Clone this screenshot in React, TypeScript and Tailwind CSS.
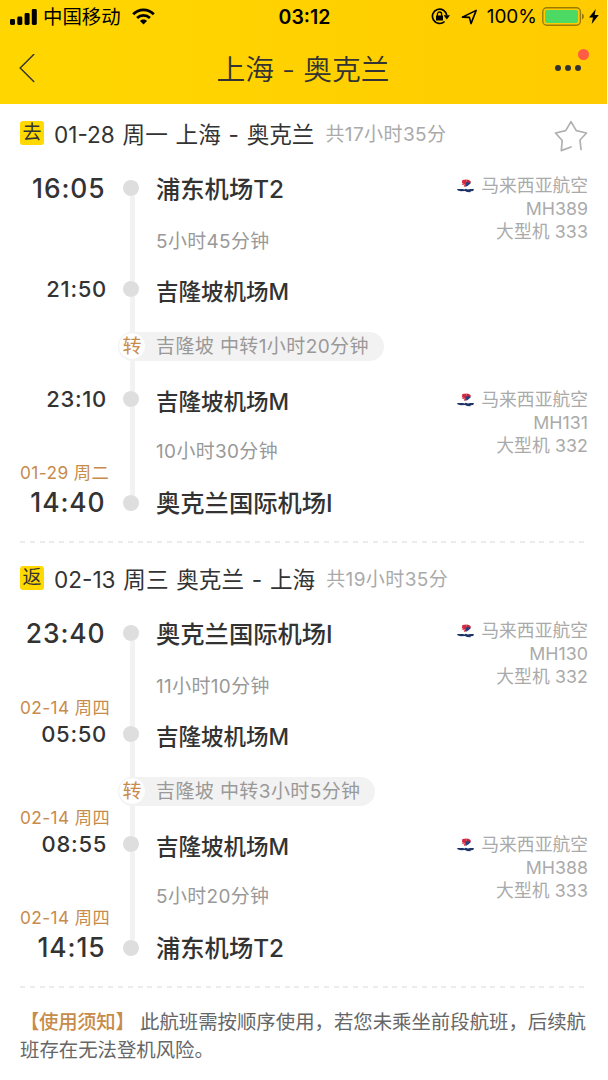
import React from "react";

interface Stop {
  time: string;
  name: string;
  date?: string;
}

interface Leg {
  from: Stop;
  to: Stop;
  duration: string;
  flightNo: string;
  aircraft: string;
}

interface Trip {
  tag: string;
  date: string;
  route: string;
  total: string;
  transfer: string;
  legs: [Leg, Leg];
}

const trips: Trip[] = [
  {
    tag: "去",
    date: "01-28 周一",
    route: "上海 - 奥克兰",
    total: "共17小时35分",
    transfer: "吉隆坡 中转1小时20分钟",
    legs: [
      {
        from: { time: "16:05", name: "浦东机场T2" },
        to: { time: "21:50", name: "吉隆坡机场M" },
        duration: "5小时45分钟",
        flightNo: "MH389",
        aircraft: "大型机 333",
      },
      {
        from: { time: "23:10", name: "吉隆坡机场M" },
        to: { time: "14:40", name: "奥克兰国际机场I", date: "01-29 周二" },
        duration: "10小时30分钟",
        flightNo: "MH131",
        aircraft: "大型机 332",
      },
    ],
  },
  {
    tag: "返",
    date: "02-13 周三",
    route: "奥克兰 - 上海",
    total: "共19小时35分",
    transfer: "吉隆坡 中转3小时5分钟",
    legs: [
      {
        from: { time: "23:40", name: "奥克兰国际机场I" },
        to: { time: "05:50", name: "吉隆坡机场M", date: "02-14 周四" },
        duration: "11小时10分钟",
        flightNo: "MH130",
        aircraft: "大型机 332",
      },
      {
        from: { time: "08:55", name: "吉隆坡机场M", date: "02-14 周四" },
        to: { time: "14:15", name: "浦东机场T2", date: "02-14 周四" },
        duration: "5小时20分钟",
        flightNo: "MH388",
        aircraft: "大型机 333",
      },
    ],
  },
];

const StatusBar: React.FC = () => (
  <div className="flex h-[33px] items-center pl-[10px] pr-[8px] text-black">
    <div className="flex flex-1 items-center">
      <svg width="27" height="16" viewBox="0 0 27 16" fill="currentColor">
        <rect x="0" y="10" width="5" height="6" rx="1.4" />
        <rect x="7.3" y="7.5" width="5" height="8.5" rx="1.4" />
        <rect x="14.6" y="4" width="5" height="12" rx="1.4" />
        <rect x="21.8" y="0" width="5" height="16" rx="1.4" />
      </svg>
      <span className="ml-[6px] text-[19.4px] leading-[24px]">中国移动</span>
      <svg
        className="ml-[11px]"
        width="23"
        height="17"
        viewBox="0 0 23 17"
        fill="none"
        stroke="currentColor"
        strokeWidth="2.8"
      >
        <path d="M1.2 6.2C7 .3 16 .3 21.8 6.2" />
        <path d="M5.1 10c3.6-3.5 9.2-3.5 12.8 0" />
        <path d="M8 12.9c2-1.9 5-1.9 7 0L11.5 16.6Z" fill="currentColor" stroke="none" />
      </svg>
    </div>
    <span className="text-[19.5px] font-semibold leading-[24px]">03:12</span>
    <div className="flex flex-1 items-center justify-end">
      <svg width="20" height="17" viewBox="0 0 20 17" fill="none">
        <path
          d="M13.6 13.5A7.2 7.2 0 1 1 15.8 7.4"
          stroke="currentColor"
          strokeWidth="1.7"
        />
        <path d="M12.6 7.2h6.4l-3.2 4.2Z" fill="currentColor" />
        <rect x="5" y="7.4" width="7" height="5.2" rx=".6" fill="currentColor" />
        <path d="M6.4 8V6.1a2.1 2.1 0 0 1 4.2 0V8" stroke="currentColor" strokeWidth="1.3" />
      </svg>
      <svg className="ml-[10px]" width="17" height="16" viewBox="0 0 17 16" fill="none">
        <path
          d="M15.2 1.4 1.4 8.1l7 .3 1.6 6.2Z"
          stroke="currentColor"
          strokeWidth="1.6"
          strokeLinejoin="round"
        />
      </svg>
      <span className="ml-[9px] text-[19px] leading-[24px]">100%</span>
      <svg className="ml-[5px]" width="44" height="19" viewBox="0 0 44 19">
        <rect x=".8" y=".8" width="37.6" height="17.4" rx="4" fill="none" stroke="#9a7b06" strokeWidth="1.4" />
        <rect x="3" y="3" width="33" height="13" rx="2" fill="#4cd964" />
        <path d="M40 6.5c2.6 1 2.6 5 0 6Z" fill="#9a7b06" />
      </svg>
      <svg className="ml-[3px]" width="10" height="15" viewBox="0 0 10 15" fill="currentColor">
        <path d="M6.8 0 0 8.4h4L2.7 15 9.8 6H5.6Z" />
      </svg>
    </div>
  </div>
);

const Header: React.FC = () => (
  <header className="h-[104px] w-[607px] bg-linear-to-r from-[#ffd700] to-[#ffcb00]">
    <StatusBar />
    <div className="flex h-[71px] items-center justify-between pl-[19px] pr-[25px] text-[#333]">
      <svg width="60" height="30" viewBox="0 0 60 30" fill="none" stroke="currentColor" strokeWidth="1.4">
        <path d="M15.2 0 1.2 14l14 14" />
      </svg>
      <h1 className="pt-[2px] text-[28.8px] font-[350] leading-[36px]">上海 - 奥克兰</h1>
      <div className="relative mb-[1px] mr-px flex w-[54px] justify-end gap-[3.5px]">
        <i className="size-[6.5px] rounded-full bg-[#333]" />
        <i className="size-[6.5px] rounded-full bg-[#333]" />
        <i className="size-[6.5px] rounded-full bg-[#333]" />
        <i className="absolute -right-[8px] -top-[16px] size-[11px] rounded-full bg-[#ff5b45]" />
      </div>
    </div>
  </header>
);

const Rail: React.FC<{ hidden?: boolean }> = ({ hidden }) => (
  <i className={`ml-px w-[5px] flex-1 ${hidden ? "" : "bg-[#f2f2f2]"}`} />
);

interface StopRowProps {
  stop: Stop;
  className: string;
  terminal?: "first" | "last";
}

const StopRow: React.FC<StopRowProps> = ({ stop, className, terminal }) => (
  <div className={`flex ${className}`}>
    <div
      className={`flex w-[118px] items-center justify-end font-[450] ${
        terminal
          ? "pr-[12.5px] text-[26.4px] tracking-[0.9px]"
          : "pr-[11px] text-[22px] tracking-[0.7px]"
      } ${terminal === "first" ? "pt-px" : ""}`}
    >
      {stop.time}
    </div>
    <div className="flex w-[27px] flex-col items-center">
      <Rail hidden={terminal === "first"} />
      <i className="mr-px size-[16px] rounded-full bg-[#dedede]" />
      <Rail hidden={terminal === "last"} />
    </div>
    <div
      className={`ml-[11px] flex items-center whitespace-nowrap font-medium ${
        terminal ? "text-[24.3px]" : "pt-[6px] text-[22.5px]"
      } ${terminal === "first" ? "pt-[2px]" : ""}`}
    >
      {stop.name}
    </div>
  </div>
);

const DateLabel: React.FC<{ date?: string; className: string }> = ({ date, className }) => (
  <div
    className={`flex w-[118px] items-end whitespace-nowrap pl-[20px] text-[17.3px] tracking-[0.4px] text-[#c78b4b] ${className}`}
  >
    {date}
  </div>
);

const DurationRow: React.FC<{ leg: Leg; last: boolean }> = ({ leg, last }) => (
  <div className={`flex ${last ? "h-[74px]" : "h-[58px]"}`}>
    <DateLabel date={leg.to.date} className={last ? "leading-[30px]" : "leading-[14px]"} />
    <div className="flex w-[27px] flex-col items-center">
      <Rail />
    </div>
    <span className="ml-[11px] flex items-center pt-[3px] text-[18.9px] tracking-[0.4px] text-[#999]">
      {leg.duration}
    </span>
  </div>
);

const AirlineLogo: React.FC = () => (
  <svg width="17" height="14" viewBox="0 0 17 14">
    <path d="M5.4.9 9.6.4 10 6 8 8 6.5 7l1.7-1.5-3.6.4 2-1.6-1.8.2Z" fill="#d9283c" />
    <path d="M9.8.4c3 .2 4.4 1.7 4 3.4L11.6 6l-2.2.6Z" fill="#c0243f" />
    <path d="M8.6 3.6 11 3.2l2.8.8-2.6 2.6L8.6 8l.6-2Z" fill="#27417f" />
    <path
      d="M0 9.9h6l1.4.7 1.4-.8 2.2.6 2-.3h4l-.8 1.9-2.4.2-.6 1-3.2-.2-2-.9-4 .1-3.2-.6Z"
      fill="#1e3467"
    />
  </svg>
);

const LegBlock: React.FC<{ leg: Leg; last?: boolean }> = ({ leg, last = false }) => (
  <div className="flex justify-between pr-[20px]">
    <div>
      <StopRow
        stop={leg.from}
        className={last ? "h-[30px]" : "h-[48px]"}
        terminal={last ? undefined : "first"}
      />
      <DurationRow leg={leg} last={last} />
      <StopRow
        stop={leg.to}
        className={last ? "h-[30px]" : "h-[38px]"}
        terminal={last ? "last" : undefined}
      />
    </div>
    <div
      className={`flex flex-col items-end text-[17.8px] text-[#aaa] ${
        last ? "pt-[5px]" : "pt-[11px]"
      }`}
    >
      <span className="flex h-[22px] items-center gap-[7px]">
        <AirlineLogo />
        马来西亚航空
      </span>
      <span className="h-[23px] leading-[23px]">{leg.flightNo}</span>
      <span className="h-[24px] leading-[24px] tracking-[0.1px]">{leg.aircraft}</span>
    </div>
  </div>
);

const TransferRow: React.FC<{ text: string; date?: string }> = ({ text, date }) => (
  <div className="flex h-[76px]">
    <DateLabel date={date} className="leading-[22px]" />
    <div className="flex flex-col">
      <div className="flex w-[27px] flex-1 justify-center">
        <i className="ml-px w-[5px] bg-[#f2f2f2]" />
      </div>
      <div className="flex h-[29px] items-center rounded-full bg-[#f2f2f2] pr-[15px]">
        <span className="flex size-[28px] items-center justify-center rounded-full border border-[#f2f2f2] bg-white pt-[2px] text-[19px] text-[#c78b4b]">
          转
        </span>
        <span className="ml-[10px] pt-[2px] text-[19px] tracking-[0.4px] text-[#999]">
          {text}
        </span>
      </div>
      <div className="flex w-[27px] flex-1 justify-center">
        <i className="ml-px w-[5px] bg-[#f2f2f2]" />
      </div>
    </div>
  </div>
);

const StarIcon: React.FC = () => (
  <svg
    className="mt-[4px]"
    width="34"
    height="32"
    viewBox="0 0 34 32"
    fill="none"
    stroke="#b0b0b0"
    strokeWidth="1.7"
    strokeLinejoin="round"
    strokeLinecap="round"
  >
    <path d="M27 29.5 26 20 32.5 13 22.3 10.6 17 1.6 11.7 10.6 1.5 13 8.2 20.5 7.3 30.6 17 27" />
  </svg>
);

const Divider: React.FC = () => (
  <div className="mx-[20px] h-[2px] bg-[repeating-linear-gradient(90deg,#ececec_0_5px,transparent_5px_9.8px)]" />
);

const TripBlock: React.FC<{ trip: Trip; favorite?: boolean }> = ({ trip, favorite }) => (
  <section>
    <div className="flex h-[60px] items-center pl-[20px] pr-[20px]">
      <span className="mb-[3px] flex size-[24px] items-center justify-center rounded-[3px] bg-[#ffd900] text-[19px] leading-[24px]">
        {trip.tag}
      </span>
      <h2 className="ml-[10px] whitespace-pre pt-px text-[22.6px] [word-spacing:1.4px]">
        {trip.date} {trip.route}
      </h2>
      <span className="ml-[11px] flex-1 pt-[2px] text-[19px] tracking-[0.4px] text-[#aaa]">
        {trip.total}
      </span>
      {favorite && <StarIcon />}
    </div>
    <LegBlock leg={trip.legs[0]} />
    <TransferRow text={trip.transfer} date={trip.legs[1].from.date} />
    <LegBlock leg={trip.legs[1]} last />
    <div className="h-[23px]" />
    <Divider />
  </section>
);

const App: React.FC = () => {
  return (
    <div className="h-[1080px] w-[608px] overflow-hidden bg-white font-['Inter','Noto_Sans_CJK_SC',sans-serif] text-[#333]">
      <Header />
      <main className="flex flex-col gap-[6px]">
        {trips.map((trip, index) => (
          <TripBlock key={trip.tag} trip={trip} favorite={index === 0} />
        ))}
      </main>
      <p className="mt-[20px] pl-[20px] pr-[18px] text-[19.4px] leading-[28px] text-[#666]">
        <span className="font-medium tracking-[-0.3px] text-[#c78b4b]">【使用须知】</span>{" "}
        此航班需按顺序使用，若您未乘坐前段航班，后续航班存在无法登机风险。
      </p>
    </div>
  );
};

export default App;
